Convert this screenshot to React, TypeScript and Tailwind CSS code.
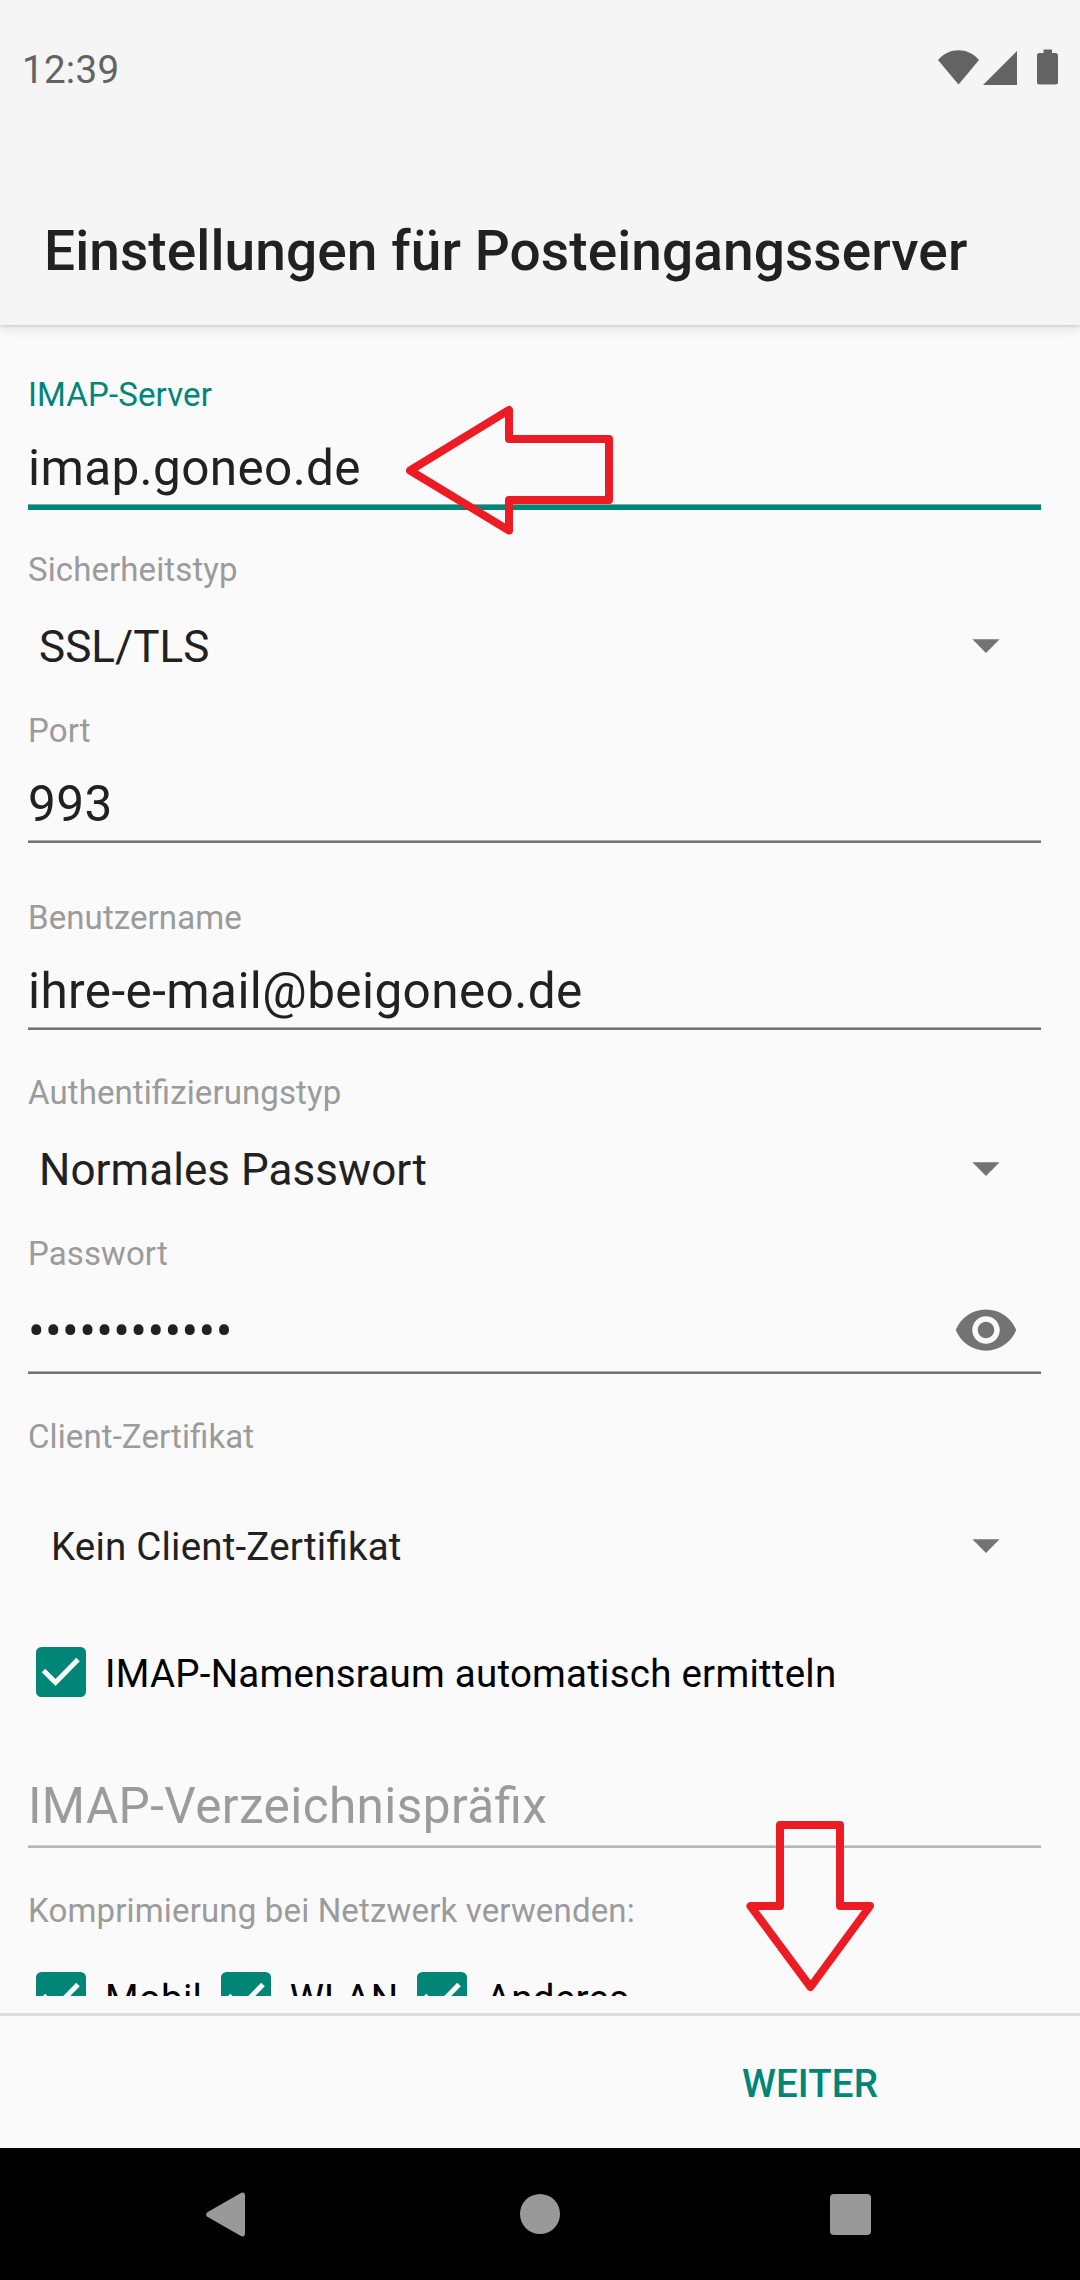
import React from "react";

type FieldProps = {
  label: string;
  value: string;
  className?: string;
};

const Underline = () => (
  <div className="h-[3px] border-t border-[#adadad] bg-[#737373]" />
);

const Label = ({ children }: { children: React.ReactNode }) => (
  <p className="h-10 text-[33px] leading-[40px] tracking-[0.1px] text-[#9b9b9b]">
    {children}
  </p>
);

const Caret = () => (
  <svg
    className="mb-0.5"
    width="28"
    height="14"
    viewBox="0 0 28 14"
    fill="#737373"
  >
    <path d="M0.4 0.3h27.2L14 14z" />
  </svg>
);

const TextField = ({ label, value, className }: FieldProps) => (
  <div className={className}>
    <Label>{label}</Label>
    <p className="mt-[23px] mb-1.5 text-[49.5px] leading-[60px] tracking-[0.4px]">
      {value}
    </p>
    <Underline />
  </div>
);

const SelectField = ({ label, value, className }: FieldProps) => (
  <div className={className}>
    <Label>{label}</Label>
    <div className="mt-[31px] flex h-[52px] items-center justify-between pr-[41px] pl-[11px]">
      <p className="text-[44px] leading-[52px] tracking-[0.05px]">{value}</p>
      <Caret />
    </div>
  </div>
);

const CheckItem = ({ label }: { label: string }) => (
  <div className="flex h-[50px] items-center">
    <svg width="50" height="50" viewBox="0 0 50 50">
      <rect width="50" height="50" rx="5.5" fill="#008577" />
      <path
        d="M7.5 23.5L19.5 35.5L42 12.5"
        fill="none"
        stroke="#fafafa"
        strokeWidth="5"
      />
    </svg>
    <span className="ml-[19px] pt-[3px] text-[38.5px] leading-[47px] tracking-[0.24px] whitespace-nowrap text-black">
      {label}
    </span>
  </div>
);

const App = () => {
  return (
    <div className="relative flex h-[2280px] w-[1080px] flex-col overflow-hidden bg-[#fafafa] font-['Roboto',sans-serif] text-[#212121] [font-feature-settings:'liga'_1]">
      <header className="z-10 h-[325px] bg-[#f5f5f5] shadow-[0_1px_3px_rgba(0,0,0,0.16),0_4px_12px_rgba(0,0,0,0.09)]">
        <div className="flex h-[136px] items-center justify-between pr-[22px] pl-[22px] text-[#636363]">
          <span className="pt-[3px] text-[38.5px] leading-[46px] tracking-[0.3px]">
            12:39
          </span>
          <div className="mb-0.5 flex h-9 items-end">
            <svg width="41" height="35" viewBox="0 0 41 35" fill="currentColor">
              <path d="M0 10C5.5 3.5 13 0.3 20.5 0.3S35.500 3.500 41 10L20.500 34.500z" />
            </svg>
            <svg
              className="ml-1"
              width="34"
              height="34"
              viewBox="0 0 34 34"
              fill="currentColor"
            >
              <path d="M34 0v34H0z" />
            </svg>
            <svg
              className="ml-5"
              width="21"
              height="36"
              viewBox="0 0 21 36"
              fill="currentColor"
            >
              <path d="M6.500 0.500h8.500v3.500h3.500a2.500 2.500 0 0 1 2.500 2.500v26.500a2.500 2.500 0 0 1-2.500 2.500h-16a2.500 2.500 0 0 1-2.500-2.500v-26.500a2.500 2.500 0 0 1 2.500-2.500h4z" />
            </svg>
          </div>
        </div>
        <h1 className="mt-[83px] pl-11 text-[55px] leading-[64px] font-medium tracking-[0.09px]">
          Einstellungen für Posteingangsserver
        </h1>
      </header>

      <main className="h-[1671px] overflow-hidden pr-[39px] pl-7">
        {/* focused field */}
        <div className="pt-[50px]">
          <p className="h-10 text-[33px] leading-[40px] tracking-[0.13px] text-[#008577]">
            IMAP-Server
          </p>
          <p className="mt-[23px] mb-1.5 text-[49.5px] leading-[60px] tracking-[0.36px]">
            imap.goneo.de
          </p>
          <div className="h-1.5 border-t border-[#66b5ac] bg-[#008577]" />
        </div>

        <SelectField className="mt-10" label="Sicherheitstyp" value="SSL/TLS" />
        <TextField className="mt-[38px]" label="Port" value="993" />
        <TextField
          className="mt-[55px]"
          label="Benutzername"
          value="ihre-e-mail@beigoneo.de"
        />
        <SelectField
          className="mt-[43px]"
          label="Authentifizierungstyp"
          value="Normales Passwort"
        />

        <div className="mt-[38px]">
          <Label>Passwort</Label>
          <div className="mt-[23px] flex h-[66px] items-center justify-between pr-[22px]">
            <p className="pt-0.5 text-[49.5px] leading-[60px] tracking-[0.36px]">
              ••••••••••••
            </p>
            <svg width="66" height="66" viewBox="0 0 24 24" fill="#737373">
              <path d="M12 4.5C7 4.5 2.730 7.610 1 12c1.730 4.390 6 7.500 11 7.500s9.270-3.110 11-7.500c-1.730-4.390-6-7.500-11-7.500zM12 17c-2.760 0-5-2.240-5-5s2.240-5 5-5 5 2.240 5 5-2.240 5-5 5zm0-8c-1.660 0-3 1.340-3 3s1.340 3 3 3 3-1.340 3-3-1.340-3-3-3z" />
            </svg>
          </div>
          <div className="mt-2">
            <Underline />
          </div>
        </div>

        <div className="mt-[43px]">
          <Label>Client-Zertifikat</Label>
          <div className="mt-[67px] flex h-[46px] items-center justify-between pr-[41px] pl-[23px]">
            <p className="text-[38.5px] leading-[46px] tracking-[0.2px]">
              Kein Client-Zertifikat
            </p>
            <Caret />
          </div>
        </div>

        <div className="mt-[77px] pl-2">
          <CheckItem label="IMAP-Namensraum automatisch ermitteln" />
        </div>

        <p className="mt-[79px] mb-[9px] text-[49.5px] leading-[60px] tracking-[0.4px] text-[#9b9b9b]">
          IMAP-Verzeichnispräfix
        </p>
        <div className="h-[3px] border-t border-[#d0d0d0] bg-[#b5b5b5]" />

        <div className="mt-[43px]">
          <Label>
            <span className="tracking-[0.16px]">
              Komprimierung bei Netzwerk verwenden:
            </span>
          </Label>
          <div className="mt-[41px] flex gap-[18.5px] pl-2">
            <CheckItem label="Mobil" />
            <CheckItem label="WLAN" />
            <CheckItem label="Anderes" />
          </div>
        </div>
      </main>

      <footer className="mt-[17px] flex h-[135px] items-center justify-center border-t-[3px] border-[#dcdcdc] pl-[540px]">
        <button className="pt-[3px] text-[38.5px] leading-[46px] font-medium tracking-[0.1px] text-[#008577]">
          WEITER
        </button>
      </footer>

      <nav className="flex h-[132px] items-center justify-between bg-black pr-[209px] pl-[206px]">
        <svg width="40" height="45" viewBox="0 0 40 45" fill="#999999">
          <path d="M1.300 20.200L34.500 1.200Q39 -1 39 4V41Q39 46 34.500 43.800L1.300 24.800Q-1 22.500 1.300 20.200z" />
        </svg>
        <div className="ml-1 size-10 rounded-full bg-[#999999]" />
        <div className="size-[41px] rounded bg-[#999999]" />
      </nav>

      {/* hint arrows on top of the form */}
      <svg
        className="absolute top-[400px] left-[400px] z-20"
        width="220"
        height="140"
        viewBox="400 400 220 140"
        fill="none"
        stroke="#ed1c24"
        strokeWidth="8"
        strokeLinejoin="round"
      >
        <path d="M410 470.500L509 410V439H609V500H509V530.500z" />
      </svg>
      <svg
        className="absolute top-[1815px] left-[740px] z-20"
        width="140"
        height="185"
        viewBox="740 1815 140 185"
        fill="none"
        stroke="#ed1c24"
        strokeWidth="8"
        strokeLinejoin="round"
      >
        <path d="M780 1825H840V1906H870L810.500 1987L750.500 1906H780z" />
      </svg>
    </div>
  );
};

export default App;
